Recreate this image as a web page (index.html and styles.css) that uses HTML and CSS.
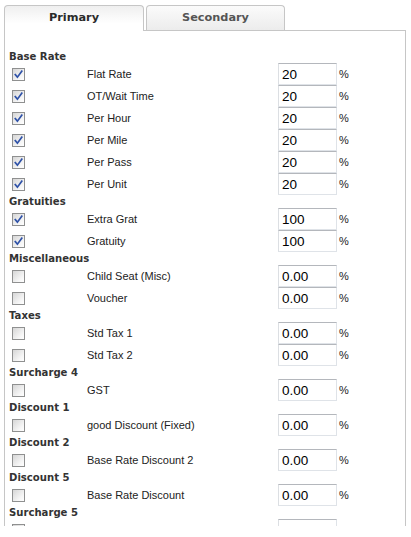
FILE: index.html
```html
<!DOCTYPE html>
<html>
<head>
<meta charset="utf-8">
<link rel="stylesheet" href="styles.css">
</head>
<body>
<div class="frame">
  <div class="tabs">
    <div class="tab active">Primary</div>
    <div class="tab">Secondary</div>
  </div>
  <div class="panel">
    <div class="group-title">Base Rate</div>
    <div class="row"><span class="cb checked"><svg viewBox="0 0 11 11"><path d="M2.3 5.6 L4.4 8.2 L8.8 2.2"/></svg></span><span class="label">Flat Rate</span><input class="field" type="text" value="20"><span class="pct">%</span></div>
    <div class="row"><span class="cb checked"><svg viewBox="0 0 11 11"><path d="M2.3 5.6 L4.4 8.2 L8.8 2.2"/></svg></span><span class="label">OT/Wait Time</span><input class="field" type="text" value="20"><span class="pct">%</span></div>
    <div class="row"><span class="cb checked"><svg viewBox="0 0 11 11"><path d="M2.3 5.6 L4.4 8.2 L8.8 2.2"/></svg></span><span class="label">Per Hour</span><input class="field" type="text" value="20"><span class="pct">%</span></div>
    <div class="row"><span class="cb checked"><svg viewBox="0 0 11 11"><path d="M2.3 5.6 L4.4 8.2 L8.8 2.2"/></svg></span><span class="label">Per Mile</span><input class="field" type="text" value="20"><span class="pct">%</span></div>
    <div class="row"><span class="cb checked"><svg viewBox="0 0 11 11"><path d="M2.3 5.6 L4.4 8.2 L8.8 2.2"/></svg></span><span class="label">Per Pass</span><input class="field" type="text" value="20"><span class="pct">%</span></div>
    <div class="row"><span class="cb checked"><svg viewBox="0 0 11 11"><path d="M2.3 5.6 L4.4 8.2 L8.8 2.2"/></svg></span><span class="label">Per Unit</span><input class="field" type="text" value="20"><span class="pct">%</span></div>

    <div class="group-title">Gratuities</div>
    <div class="row"><span class="cb checked"><svg viewBox="0 0 11 11"><path d="M2.3 5.6 L4.4 8.2 L8.8 2.2"/></svg></span><span class="label">Extra Grat</span><input class="field" type="text" value="100"><span class="pct">%</span></div>
    <div class="row"><span class="cb checked"><svg viewBox="0 0 11 11"><path d="M2.3 5.6 L4.4 8.2 L8.8 2.2"/></svg></span><span class="label">Gratuity</span><input class="field" type="text" value="100"><span class="pct">%</span></div>

    <div class="group-title">Miscellaneous</div>
    <div class="row"><span class="cb"></span><span class="label">Child Seat (Misc)</span><input class="field" type="text" value="0.00"><span class="pct">%</span></div>
    <div class="row"><span class="cb"></span><span class="label">Voucher</span><input class="field" type="text" value="0.00"><span class="pct">%</span></div>

    <div class="group-title">Taxes</div>
    <div class="row"><span class="cb"></span><span class="label">Std Tax 1</span><input class="field" type="text" value="0.00"><span class="pct">%</span></div>
    <div class="row"><span class="cb"></span><span class="label">Std Tax 2</span><input class="field" type="text" value="0.00"><span class="pct">%</span></div>

    <div class="group-title">Surcharge 4</div>
    <div class="row"><span class="cb"></span><span class="label">GST</span><input class="field" type="text" value="0.00"><span class="pct">%</span></div>

    <div class="group-title">Discount 1</div>
    <div class="row"><span class="cb"></span><span class="label">good Discount (Fixed)</span><input class="field" type="text" value="0.00"><span class="pct">%</span></div>

    <div class="group-title">Discount 2</div>
    <div class="row"><span class="cb"></span><span class="label">Base Rate Discount 2</span><input class="field" type="text" value="0.00"><span class="pct">%</span></div>

    <div class="group-title">Discount 5</div>
    <div class="row"><span class="cb"></span><span class="label">Base Rate Discount</span><input class="field" type="text" value="0.00"><span class="pct">%</span></div>

    <div class="group-title">Surcharge 5</div>
    <div class="row"><span class="cb"></span><span class="label">Non Misc fee</span><input class="field" type="text" value="0.00"><span class="pct">%</span></div>
  </div>
</div>
</body>
</html>
```

FILE: styles.css
```css
html, body {
  margin: 0;
  padding: 0;
  background: #ffffff;
}

.frame {
  padding: 5px 0 0 4px;
  height: 521px;
  overflow: hidden;
}

.tabs {
  display: flex;
  gap: 2px;
  width: 402px;
  height: 25px;
  border-bottom: 1px solid #c6c6c6;
}

.tab {
  box-sizing: border-box;
  width: 139px;
  border: 1px solid #c6c6c6;
  border-bottom: none;
  border-radius: 4px 4px 0 0;
  background: linear-gradient(#fbfbfb, #ececec);
  text-align: center;
  font-family: "DejaVu Sans", sans-serif;
  font-weight: bold;
  font-size: 11.3px;
  line-height: 24px;
  color: #555555;
}

.tab.active {
  width: 140px;
  margin-bottom: -1px;
  background: linear-gradient(#efefef, #ffffff 70%);
  color: #2a2a2a;
}

.panel {
  box-sizing: border-box;
  width: 402px;
  border: 1px solid #c6c6c6;
  border-top: none;
  padding: 19px 0 20px 4px;
}

.group-title {
  height: 13px;
  line-height: 13px;
  font-family: "DejaVu Sans", sans-serif;
  font-weight: bold;
  font-size: 10.1px;
  color: #333333;
}

.row {
  display: flex;
  align-items: center;
  height: 22px;
}

.cb {
  box-sizing: border-box;
  flex: none;
  width: 13px;
  height: 13px;
  margin-left: 3px;
  margin-right: 62px;
  border: 1px solid #8f9090;
  background: linear-gradient(135deg, #d6d6d6, #f6f6f6 70%, #ffffff);
}

.cb svg {
  display: block;
  width: 11px;
  height: 11px;
}

.cb svg path {
  fill: none;
  stroke: #2f52a8;
  stroke-width: 1.7;
  stroke-linecap: square;
}

.label {
  flex: none;
  width: 191px;
  font-family: "Liberation Sans", Arial, sans-serif;
  font-size: 11px;
  color: #222222;
  white-space: nowrap;
}

.field {
  flex: none;
  box-sizing: border-box;
  width: 59px;
  height: 22px;
  margin: 0;
  padding: 0 3px;
  border: 1px solid #dfe3e8;
  border-top-color: #b4b7bc;
  border-left-color: #dcdfe3;
  font-family: "Liberation Sans", Arial, sans-serif;
  font-size: 13.5px;
  color: #000000;
  background: #ffffff;
  outline: none;
}

.pct {
  margin-left: 2px;
  font-family: "Liberation Sans", Arial, sans-serif;
  font-size: 11px;
  color: #222222;
}
```
